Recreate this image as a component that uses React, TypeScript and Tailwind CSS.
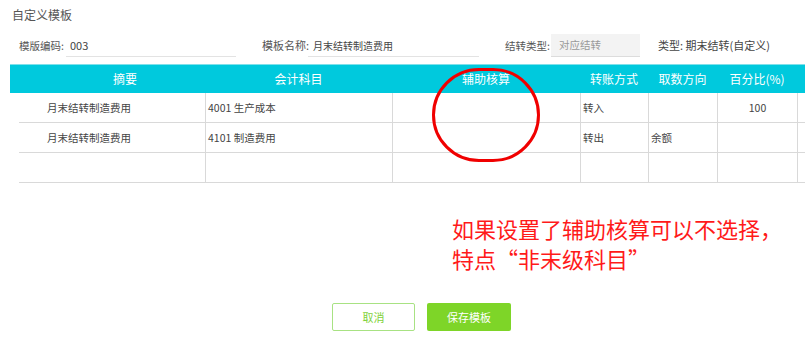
import React from "react";

const font = { fontFamily: '"Noto Sans CJK SC", "Noto Sans", "Liberation Sans", sans-serif' };

export default function App() {
  const rows = [
    { a: "月末结转制造费用", b: "4001 生产成本", d: "转入", e: "", f: "100" },
    { a: "月末结转制造费用", b: "4101 制造费用", d: "转出", e: "余额", f: "" },
    { a: "", b: "", d: "", e: "", f: "" },
  ];
  return (
    <div
      className="relative w-[805px] h-[339px] bg-white overflow-hidden text-[#444]"
      style={font}
    >
      <div className="pl-[12px] pt-[5px] h-[25px] text-[12px] leading-[20px] text-[#555]">
        自定义模板
      </div>

      <div className="flex items-center h-[23px] mt-[9px] text-[11px] text-[#555] whitespace-nowrap">
        <div className="pl-[19px] w-[66px] shrink-0 text-[10.5px]">模版编码:</div>
        <div className="w-[170px] shrink-0 h-[23px] flex items-center pl-[4px] border-b border-[#e3e3e3] text-[#444]">
          003
        </div>
        <div className="ml-[26px] w-[46px] shrink-0">模板名称:</div>
        <div className="w-[171px] shrink-0 h-[23px] flex items-center pl-[5px] border-b border-[#e3e3e3] text-[#444] text-[10px]">
          月末结转制造费用
        </div>
        <div className="ml-[26px] w-[46px] shrink-0 text-[10.5px]">结转类型:</div>
        <div className="w-[89px] shrink-0 h-[23px] flex items-center pl-[8px] bg-[#f3f3f3] border-b border-[#dcdcdc] text-[#999] text-[10.5px]">
          对应结转
        </div>
        <div className="ml-[18px] text-[#444]">类型: 期末结转(自定义)</div>
      </div>

      <div className="mt-[7px]">
        <div className="ml-[10px] flex h-[29px] items-center bg-[#00c9dd] border-t border-[#7fe0ea] text-white text-[12px]">
          <div className="w-[195px] pl-[35px] text-center">摘要</div>
          <div className="w-[187px] text-center">会计科目</div>
          <div className="w-[188px] text-center">辅助核算</div>
          <div className="w-[68px] text-center">转账方式</div>
          <div className="w-[69px] text-center">取数方向</div>
          <div className="w-[80px] text-center">百分比(%)</div>
          <div className="flex-1" />
        </div>
        <div className="ml-[19px] text-[10.5px] text-[#444]">
          {rows.map((r, i) => (
            <div key={i} className="flex h-[30px] border-b border-[#d9d9d9]">
              <div className="w-[186px] pl-[28px] flex items-center">{r.a}</div>
              <div className="w-[187px] border-l border-[#d9d9d9] pl-[2px] flex items-center">
                {r.b}
              </div>
              <div className="w-[188px] border-l border-[#d9d9d9]" />
              <div className="w-[68px] border-l border-[#d9d9d9] pl-[2px] flex items-center">
                {r.d}
              </div>
              <div className="w-[69px] border-l border-[#d9d9d9] pl-[2px] flex items-center">
                {r.e}
              </div>
              <div className="w-[80px] border-l border-[#d9d9d9] flex items-center justify-center">
                {r.f}
              </div>
              <div className="flex-1 border-l border-[#d9d9d9]" />
            </div>
          ))}
        </div>
      </div>

      <div className="mt-[30px] pl-[452px] text-[22px] leading-[30px] text-[#ff1a1a]">
        <div>如果设置了辅助核算可以不选择，</div>
        <div>特点“非末级科目”</div>
      </div>

      <div className="mt-[30px] pl-[332px] flex gap-[12px] text-[11px]">
        <div className="w-[83px] h-[28px] flex items-center justify-center border border-[#a8e283] rounded-[2px] text-[#7fd23a]">
          取消
        </div>
        <div className="w-[84px] h-[28px] flex items-center justify-center bg-[#7ed528] rounded-[2px] text-white">
          保存模板
        </div>
      </div>

      <div className="absolute left-[432px] top-[68px] w-[108px] h-[94px] rounded-full border-[3px] border-[#f00000]" />
    </div>
  );
}
